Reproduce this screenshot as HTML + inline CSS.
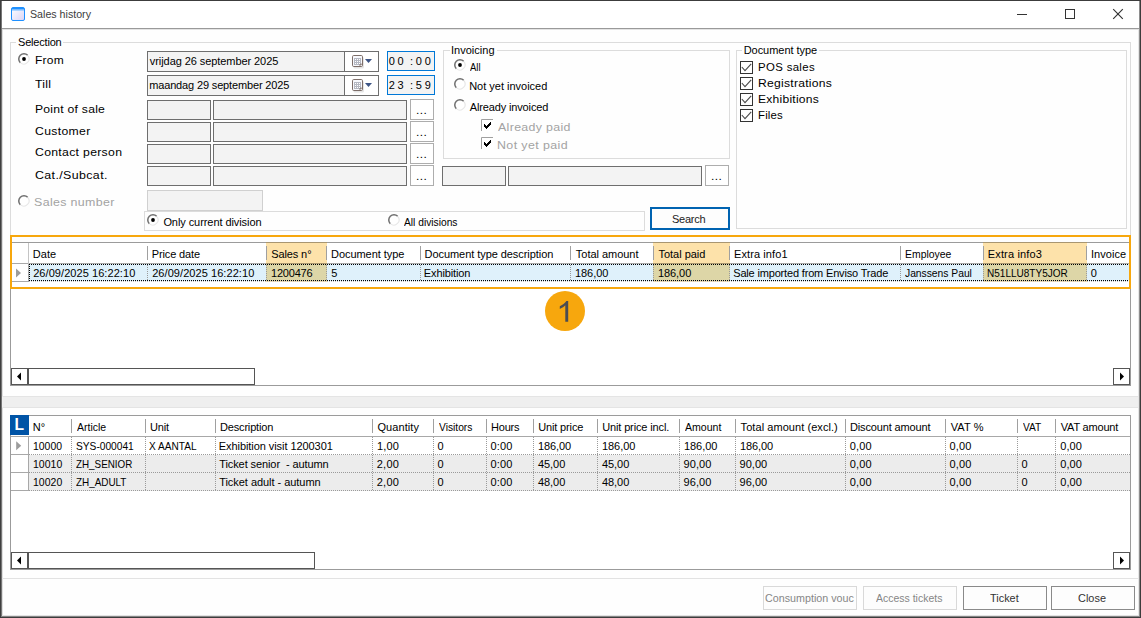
<!DOCTYPE html><html><head><meta charset="utf-8"><title>Sales history</title><style>html,body{margin:0;padding:0;background:#fefefe;}
body{width:1141px;height:618px;overflow:hidden;position:relative;font-family:"Liberation Sans", sans-serif;}
#w div,#w svg,#w span{position:absolute;display:block}
#w span{white-space:pre;line-height:16px;height:16px}
#w{position:absolute;left:0;top:0;width:1141px;height:618px;overflow:hidden}</style></head><body><div id="w"><div style="left:0px;top:0px;width:1141px;height:618px;background:#fefefe"></div><div style="left:0px;top:0px;width:1141px;height:28px;background:#fff"></div><div style="left:0px;top:28px;width:1141px;height:1px;background:#9a9a9a"></div><div style="left:0px;top:29px;width:1141px;height:1px;background:#e4e4e4"></div><div style="left:0px;top:0px;width:1141px;height:1px;background:#3c3c3c"></div><div style="left:0px;top:0px;width:1px;height:618px;background:#3f3f3f"></div><div style="left:1px;top:1px;width:1px;height:618px;background:#767676"></div><div style="left:2px;top:29px;width:1px;height:618px;background:#dedede"></div><div style="left:1140px;top:0px;width:1px;height:618px;background:#3c3c3c"></div><div style="left:1139px;top:1px;width:1px;height:618px;background:#8e8e8e"></div><div style="left:1138px;top:29px;width:1px;height:618px;background:#e6e6e6"></div><div style="left:0px;top:617px;width:1141px;height:1px;background:#3c3c3c"></div><div style="left:1px;top:616px;width:1139px;height:1px;background:#858585"></div><div style="left:2px;top:615px;width:1137px;height:1px;background:#e3e3e3"></div><svg style="left:11px;top:7px" width="14" height="14" viewBox="0 0 14 14"><defs><linearGradient id="ig" x1="0" y1="0" x2="1" y2="1"><stop offset="0" stop-color="#ffffff"/><stop offset="1" stop-color="#d9d4f6"/></linearGradient></defs><rect x="0.5" y="0.5" width="13" height="13" rx="1.5" fill="url(#ig)" stroke="#1e90ff"/><rect x="1" y="1" width="12" height="1.6" fill="#1e90ff"/><rect x="1" y="2.6" width="12" height="1" fill="#7fc0ff"/></svg><svg style="left:1010px;top:4px" width="125" height="22" viewBox="0 0 125 22"><g stroke="#333" stroke-width="1" fill="none"><path d="M7 10.5H17"/><rect x="55.5" y="5.5" width="9" height="9"/><path d="M103.2 5.2L112.8 14.8M112.8 5.2L103.2 14.8" stroke-width="1.15"/></g></svg><div style="left:10px;top:42px;width:1121px;height:194px;border:1px solid #dcdcdc;box-sizing:border-box"></div><div style="left:16px;top:42px;width:47px;height:1px;background:#fefefe"></div><div style="left:443px;top:50px;width:287px;height:109px;border:1px solid #dcdcdc;box-sizing:border-box"></div><div style="left:449.5px;top:50px;width:47px;height:1px;background:#fefefe"></div><div style="left:736px;top:50px;width:391px;height:179px;border:1px solid #dcdcdc;box-sizing:border-box"></div><div style="left:742px;top:50px;width:77px;height:1px;background:#fefefe"></div><div style="left:147px;top:51px;width:232px;height:21px;border:1px solid #6e6e6e;background:#f3f3f3;box-sizing:border-box"></div><div style="left:345px;top:52px;width:33px;height:19px;background:#fff"></div><div style="left:344px;top:52px;width:1px;height:19px;background:#6e6e6e"></div><svg style="left:351px;top:55px" width="24" height="15" viewBox="0 0 24 15"><rect x="2.5" y="2" width="10.5" height="11.5" rx="1.5" fill="#000" opacity="0.10"/><rect x="1.5" y="0.5" width="10" height="11" rx="1.2" fill="#f8f9fd" stroke="#7d6e69"/><rect x="3" y="3" width="7" height="7" fill="#b5b8c2"/><g fill="#fff"><rect x="4" y="4" width="1" height="1"/><rect x="4" y="6" width="1" height="1"/><rect x="4" y="8" width="1" height="1"/><rect x="6" y="4" width="1" height="1"/><rect x="6" y="6" width="1" height="1"/><rect x="6" y="8" width="1" height="1"/><rect x="8" y="4" width="1" height="1"/><rect x="8" y="6" width="1" height="1"/><rect x="8" y="8" width="1" height="1"/></g><path d="M9 11.3V9.2H11.3" fill="none" stroke="#7d6e69" stroke-width="0.9"/><path d="M14 4H21L17.5 8Z" fill="#3d5485"/></svg><div style="left:147px;top:75px;width:232px;height:21px;border:1px solid #6e6e6e;background:#f3f3f3;box-sizing:border-box"></div><div style="left:345px;top:76px;width:33px;height:19px;background:#fff"></div><div style="left:344px;top:76px;width:1px;height:19px;background:#6e6e6e"></div><svg style="left:351px;top:79px" width="24" height="15" viewBox="0 0 24 15"><rect x="2.5" y="2" width="10.5" height="11.5" rx="1.5" fill="#000" opacity="0.10"/><rect x="1.5" y="0.5" width="10" height="11" rx="1.2" fill="#f8f9fd" stroke="#7d6e69"/><rect x="3" y="3" width="7" height="7" fill="#b5b8c2"/><g fill="#fff"><rect x="4" y="4" width="1" height="1"/><rect x="4" y="6" width="1" height="1"/><rect x="4" y="8" width="1" height="1"/><rect x="6" y="4" width="1" height="1"/><rect x="6" y="6" width="1" height="1"/><rect x="6" y="8" width="1" height="1"/><rect x="8" y="4" width="1" height="1"/><rect x="8" y="6" width="1" height="1"/><rect x="8" y="8" width="1" height="1"/></g><path d="M9 11.3V9.2H11.3" fill="none" stroke="#7d6e69" stroke-width="0.9"/><path d="M14 4H21L17.5 8Z" fill="#3d5485"/></svg><div style="left:387px;top:51px;width:48px;height:20px;border:1px solid #0078d7;background:#f3f3f3;box-sizing:border-box"></div><div style="left:387px;top:75px;width:48px;height:20px;border:1px solid #0078d7;background:#f3f3f3;box-sizing:border-box"></div><div style="left:147px;top:100px;width:64px;height:20px;border:1px solid #6e6e6e;background:#f3f3f3;box-sizing:border-box"></div><div style="left:213px;top:100px;width:194px;height:20px;border:1px solid #6e6e6e;background:#f3f3f3;box-sizing:border-box"></div><div style="left:410px;top:99px;width:24px;height:21px;border:1px solid #adadad;background:#fff;box-sizing:border-box"></div><div style="left:147px;top:122px;width:64px;height:20px;border:1px solid #6e6e6e;background:#f3f3f3;box-sizing:border-box"></div><div style="left:213px;top:122px;width:194px;height:20px;border:1px solid #6e6e6e;background:#f3f3f3;box-sizing:border-box"></div><div style="left:410px;top:121px;width:24px;height:21px;border:1px solid #adadad;background:#fff;box-sizing:border-box"></div><div style="left:147px;top:144px;width:64px;height:20px;border:1px solid #6e6e6e;background:#f3f3f3;box-sizing:border-box"></div><div style="left:213px;top:144px;width:194px;height:20px;border:1px solid #6e6e6e;background:#f3f3f3;box-sizing:border-box"></div><div style="left:410px;top:143px;width:24px;height:21px;border:1px solid #adadad;background:#fff;box-sizing:border-box"></div><div style="left:147px;top:166px;width:64px;height:20px;border:1px solid #6e6e6e;background:#f3f3f3;box-sizing:border-box"></div><div style="left:213px;top:166px;width:194px;height:20px;border:1px solid #6e6e6e;background:#f3f3f3;box-sizing:border-box"></div><div style="left:410px;top:165px;width:24px;height:21px;border:1px solid #adadad;background:#fff;box-sizing:border-box"></div><div style="left:442px;top:166px;width:64px;height:20px;border:1px solid #6e6e6e;background:#f3f3f3;box-sizing:border-box"></div><div style="left:508px;top:166px;width:194px;height:20px;border:1px solid #6e6e6e;background:#f3f3f3;box-sizing:border-box"></div><div style="left:705px;top:165px;width:24px;height:21px;border:1px solid #adadad;background:#fff;box-sizing:border-box"></div><div style="left:147px;top:190px;width:116px;height:21px;border:1px solid #d0d0d0;background:#f3f3f3;box-sizing:border-box"></div><div style="left:144px;top:211px;width:501px;height:20px;border:1px solid #dcdcdc;box-sizing:border-box;background:#fefefe"></div><svg style="left:18px;top:53px" width="12" height="12" viewBox="0 0 12 12"><circle cx="6" cy="6" r="5" fill="#fff"/><path d="M2.3 9.7A5.2 5.2 0 0 1 9.7 2.3" fill="none" stroke="#6f6f6f" stroke-width="1.5"/><path d="M9.9 2.6A5.2 5.2 0 0 1 2.6 9.9" fill="none" stroke="#e6e6e6" stroke-width="1.1"/><circle cx="6" cy="6" r="1.9" fill="#000"/></svg><svg style="left:18px;top:195px" width="12" height="12" viewBox="0 0 12 12"><circle cx="6" cy="6" r="5" fill="#fff"/><path d="M2.3 9.7A5.2 5.2 0 0 1 9.7 2.3" fill="none" stroke="#6f6f6f" stroke-width="1.5"/><path d="M9.9 2.6A5.2 5.2 0 0 1 2.6 9.9" fill="none" stroke="#e6e6e6" stroke-width="1.1"/></svg><svg style="left:147px;top:214px" width="12" height="12" viewBox="0 0 12 12"><circle cx="6" cy="6" r="5" fill="#fff"/><path d="M2.3 9.7A5.2 5.2 0 0 1 9.7 2.3" fill="none" stroke="#6f6f6f" stroke-width="1.5"/><path d="M9.9 2.6A5.2 5.2 0 0 1 2.6 9.9" fill="none" stroke="#e6e6e6" stroke-width="1.1"/><circle cx="6" cy="6" r="1.9" fill="#000"/></svg><svg style="left:388px;top:214px" width="12" height="12" viewBox="0 0 12 12"><circle cx="6" cy="6" r="5" fill="#fff"/><path d="M2.3 9.7A5.2 5.2 0 0 1 9.7 2.3" fill="none" stroke="#6f6f6f" stroke-width="1.5"/><path d="M9.9 2.6A5.2 5.2 0 0 1 2.6 9.9" fill="none" stroke="#e6e6e6" stroke-width="1.1"/></svg><svg style="left:454px;top:59px" width="12" height="12" viewBox="0 0 12 12"><circle cx="6" cy="6" r="5" fill="#fff"/><path d="M2.3 9.7A5.2 5.2 0 0 1 9.7 2.3" fill="none" stroke="#6f6f6f" stroke-width="1.5"/><path d="M9.9 2.6A5.2 5.2 0 0 1 2.6 9.9" fill="none" stroke="#e6e6e6" stroke-width="1.1"/><circle cx="6" cy="6" r="1.9" fill="#000"/></svg><svg style="left:454px;top:78px" width="12" height="12" viewBox="0 0 12 12"><circle cx="6" cy="6" r="5" fill="#fff"/><path d="M2.3 9.7A5.2 5.2 0 0 1 9.7 2.3" fill="none" stroke="#6f6f6f" stroke-width="1.5"/><path d="M9.9 2.6A5.2 5.2 0 0 1 2.6 9.9" fill="none" stroke="#e6e6e6" stroke-width="1.1"/></svg><svg style="left:454px;top:99px" width="12" height="12" viewBox="0 0 12 12"><circle cx="6" cy="6" r="5" fill="#fff"/><path d="M2.3 9.7A5.2 5.2 0 0 1 9.7 2.3" fill="none" stroke="#6f6f6f" stroke-width="1.5"/><path d="M9.9 2.6A5.2 5.2 0 0 1 2.6 9.9" fill="none" stroke="#e6e6e6" stroke-width="1.1"/></svg><div style="left:650px;top:207px;width:80px;height:23px;border:2px solid #0063b1;background:#fdfdfd;box-sizing:border-box"></div><svg style="left:481px;top:119px" width="13" height="13" viewBox="0 0 13 13"><rect x="1" y="1" width="12" height="12" fill="#fff"/><path d="M0.5 12V0.5H12" fill="none" stroke="#a0a0a0"/><g fill="#000"><rect x="3" y="5" width="1" height="3"/><rect x="4" y="6" width="1" height="3"/><rect x="5" y="7" width="1" height="3"/><rect x="6" y="6" width="1" height="3"/><rect x="7" y="5" width="1" height="3"/><rect x="8" y="4" width="1" height="3"/><rect x="9" y="3" width="1" height="3"/></g></svg><svg style="left:481px;top:137px" width="13" height="13" viewBox="0 0 13 13"><rect x="1" y="1" width="12" height="12" fill="#fff"/><path d="M0.5 12V0.5H12" fill="none" stroke="#a0a0a0"/><g fill="#000"><rect x="3" y="5" width="1" height="3"/><rect x="4" y="6" width="1" height="3"/><rect x="5" y="7" width="1" height="3"/><rect x="6" y="6" width="1" height="3"/><rect x="7" y="5" width="1" height="3"/><rect x="8" y="4" width="1" height="3"/><rect x="9" y="3" width="1" height="3"/></g></svg><svg style="left:740px;top:61px" width="13" height="13" viewBox="0 0 13 13"><rect x="0.5" y="0.5" width="12" height="12" fill="#fff" stroke="#333"/><path d="M1.8 6L5 9.6L11.2 2.8" fill="none" stroke="#4a4a4a" stroke-width="1.1"/></svg><svg style="left:740px;top:77px" width="13" height="13" viewBox="0 0 13 13"><rect x="0.5" y="0.5" width="12" height="12" fill="#fff" stroke="#333"/><path d="M1.8 6L5 9.6L11.2 2.8" fill="none" stroke="#4a4a4a" stroke-width="1.1"/></svg><svg style="left:740px;top:93px" width="13" height="13" viewBox="0 0 13 13"><rect x="0.5" y="0.5" width="12" height="12" fill="#fff" stroke="#333"/><path d="M1.8 6L5 9.6L11.2 2.8" fill="none" stroke="#4a4a4a" stroke-width="1.1"/></svg><svg style="left:740px;top:109px" width="13" height="13" viewBox="0 0 13 13"><rect x="0.5" y="0.5" width="12" height="12" fill="#fff" stroke="#333"/><path d="M1.8 6L5 9.6L11.2 2.8" fill="none" stroke="#4a4a4a" stroke-width="1.1"/></svg><div style="left:10px;top:242px;width:1121px;height:144px;border:1px solid #9b9b9b;box-sizing:border-box;background:#fff"></div><div style="left:11px;top:263px;width:1119px;height:1px;background:#a8a8a8"></div><div style="left:29px;top:264px;width:1101px;height:17px;background:#dff1fb"></div><div style="left:266px;top:243px;width:61px;height:39px;background:#fde2aa"></div><div style="left:266px;top:264px;width:61px;height:17px;background:#ddd6a7"></div><div style="left:653px;top:243px;width:77px;height:39px;background:#fde2aa"></div><div style="left:653px;top:264px;width:77px;height:17px;background:#ddd6a7"></div><div style="left:983px;top:243px;width:104px;height:39px;background:#fde2aa"></div><div style="left:983px;top:264px;width:104px;height:17px;background:#ddd6a7"></div><div style="left:28px;top:243px;width:1px;height:21px;background:#c4c4c4"></div><div style="left:147px;top:246px;width:1px;height:14px;background:#a0a0a0"></div><div style="left:147px;top:265px;width:1px;height:15px;background:repeating-linear-gradient(to bottom,#9a9a9a 0 1px,transparent 1px 2px)"></div><div style="left:266px;top:246px;width:1px;height:14px;background:#a0a0a0"></div><div style="left:266px;top:265px;width:1px;height:15px;background:repeating-linear-gradient(to bottom,#9a9a9a 0 1px,transparent 1px 2px)"></div><div style="left:326px;top:246px;width:1px;height:14px;background:#a0a0a0"></div><div style="left:326px;top:265px;width:1px;height:15px;background:repeating-linear-gradient(to bottom,#9a9a9a 0 1px,transparent 1px 2px)"></div><div style="left:420px;top:246px;width:1px;height:14px;background:#a0a0a0"></div><div style="left:420px;top:265px;width:1px;height:15px;background:repeating-linear-gradient(to bottom,#9a9a9a 0 1px,transparent 1px 2px)"></div><div style="left:570px;top:246px;width:1px;height:14px;background:#a0a0a0"></div><div style="left:570px;top:265px;width:1px;height:15px;background:repeating-linear-gradient(to bottom,#9a9a9a 0 1px,transparent 1px 2px)"></div><div style="left:653px;top:246px;width:1px;height:14px;background:#a0a0a0"></div><div style="left:653px;top:265px;width:1px;height:15px;background:repeating-linear-gradient(to bottom,#9a9a9a 0 1px,transparent 1px 2px)"></div><div style="left:729px;top:246px;width:1px;height:14px;background:#a0a0a0"></div><div style="left:729px;top:265px;width:1px;height:15px;background:repeating-linear-gradient(to bottom,#9a9a9a 0 1px,transparent 1px 2px)"></div><div style="left:900px;top:246px;width:1px;height:14px;background:#a0a0a0"></div><div style="left:900px;top:265px;width:1px;height:15px;background:repeating-linear-gradient(to bottom,#9a9a9a 0 1px,transparent 1px 2px)"></div><div style="left:983px;top:246px;width:1px;height:14px;background:#a0a0a0"></div><div style="left:983px;top:265px;width:1px;height:15px;background:repeating-linear-gradient(to bottom,#9a9a9a 0 1px,transparent 1px 2px)"></div><div style="left:1086px;top:246px;width:1px;height:14px;background:#a0a0a0"></div><div style="left:1086px;top:265px;width:1px;height:15px;background:repeating-linear-gradient(to bottom,#9a9a9a 0 1px,transparent 1px 2px)"></div><div style="left:29px;top:264px;width:1101px;height:1px;background:repeating-linear-gradient(to right,#000 0 1px,transparent 1px 2px)"></div><div style="left:29px;top:280px;width:1101px;height:1px;background:repeating-linear-gradient(to right,#000 0 1px,transparent 1px 2px)"></div><div style="left:29px;top:264px;width:1px;height:17px;background:repeating-linear-gradient(to bottom,#000 0 1px,transparent 1px 2px)"></div><div style="left:11px;top:264px;width:17px;height:18px;background:#fff"></div><div style="left:11px;top:281px;width:18px;height:1px;background:#a8a8a8"></div><div style="left:28px;top:264px;width:1px;height:18px;background:#a8a8a8"></div><div style="left:29px;top:281px;width:1101px;height:1px;background:repeating-linear-gradient(to right,#c8c8c8 0 1px,transparent 1px 2px)"></div><svg style="left:16px;top:268px" width="6" height="10" viewBox="0 0 6 10"><path d="M0 0.5L5 5L0 9.5Z" fill="#9c9c9c"/></svg><div style="left:266px;top:242px;width:61px;height:1px;background:#a89671"></div><div style="left:266px;top:263px;width:61px;height:1px;background:#a7956f"></div><div style="left:653px;top:242px;width:77px;height:1px;background:#a89671"></div><div style="left:653px;top:263px;width:77px;height:1px;background:#a7956f"></div><div style="left:983px;top:242px;width:104px;height:1px;background:#a89671"></div><div style="left:983px;top:263px;width:104px;height:1px;background:#a7956f"></div><div style="left:10px;top:235px;width:1121px;height:54px;border:2px solid #f7a70d;box-sizing:border-box"></div><div style="left:545px;top:291px;width:40px;height:40px;border-radius:50%;background:#f7a70d"></div><svg style="left:555px;top:296px" width="20" height="30" viewBox="555 296 20 30"><path d="M568.2 321.8H565.3V305.2C564.2 306.3 562.2 307.9 559.8 308.9V306.2C562.9 304.9 565.4 302.7 566.4 301H568.2Z" fill="#4a4c53"/></svg><div style="left:11px;top:368px;width:17px;height:17px;border:1px solid #555;background:#fff;box-sizing:border-box"></div><svg style="left:16px;top:372px" width="6" height="9" viewBox="0 0 6 9"><path d="M5 0.5L1 4.5L5 8.5Z" fill="#000"/></svg><div style="left:28px;top:368px;width:227px;height:17px;border:1px solid #555;background:#fff;box-sizing:border-box"></div><div style="left:1113px;top:368px;width:17px;height:17px;border:1px solid #555;background:#fff;box-sizing:border-box"></div><svg style="left:1119px;top:372px" width="6" height="9" viewBox="0 0 6 9"><path d="M1 0.5L5 4.5L1 8.5Z" fill="#000"/></svg><div style="left:2px;top:396px;width:1136px;height:12px;background:#efefef;border-top:1px solid #e4e4e4;border-bottom:1px solid #e4e4e4;box-sizing:border-box"></div><div style="left:10px;top:415px;width:1121px;height:155px;border:1px solid #9b9b9b;box-sizing:border-box;background:#fff"></div><div style="left:10px;top:415px;width:19px;height:20px;background:#0054a6"></div><div style="left:11px;top:436px;width:1119px;height:1px;background:#a8a8a8"></div><div style="left:29px;top:455px;width:1101px;height:36px;background:#ececec"></div><div style="left:71px;top:419px;width:1px;height:14px;background:#a0a0a0"></div><div style="left:71px;top:437px;width:1px;height:54px;background:repeating-linear-gradient(to bottom,#9a9a9a 0 1px,transparent 1px 2px)"></div><div style="left:145px;top:419px;width:1px;height:14px;background:#a0a0a0"></div><div style="left:145px;top:437px;width:1px;height:54px;background:repeating-linear-gradient(to bottom,#9a9a9a 0 1px,transparent 1px 2px)"></div><div style="left:215px;top:419px;width:1px;height:14px;background:#a0a0a0"></div><div style="left:215px;top:437px;width:1px;height:54px;background:repeating-linear-gradient(to bottom,#9a9a9a 0 1px,transparent 1px 2px)"></div><div style="left:372px;top:419px;width:1px;height:14px;background:#a0a0a0"></div><div style="left:372px;top:437px;width:1px;height:54px;background:repeating-linear-gradient(to bottom,#9a9a9a 0 1px,transparent 1px 2px)"></div><div style="left:433px;top:419px;width:1px;height:14px;background:#a0a0a0"></div><div style="left:433px;top:437px;width:1px;height:54px;background:repeating-linear-gradient(to bottom,#9a9a9a 0 1px,transparent 1px 2px)"></div><div style="left:486px;top:419px;width:1px;height:14px;background:#a0a0a0"></div><div style="left:486px;top:437px;width:1px;height:54px;background:repeating-linear-gradient(to bottom,#9a9a9a 0 1px,transparent 1px 2px)"></div><div style="left:533px;top:419px;width:1px;height:14px;background:#a0a0a0"></div><div style="left:533px;top:437px;width:1px;height:54px;background:repeating-linear-gradient(to bottom,#9a9a9a 0 1px,transparent 1px 2px)"></div><div style="left:597px;top:419px;width:1px;height:14px;background:#a0a0a0"></div><div style="left:597px;top:437px;width:1px;height:54px;background:repeating-linear-gradient(to bottom,#9a9a9a 0 1px,transparent 1px 2px)"></div><div style="left:679px;top:419px;width:1px;height:14px;background:#a0a0a0"></div><div style="left:679px;top:437px;width:1px;height:54px;background:repeating-linear-gradient(to bottom,#9a9a9a 0 1px,transparent 1px 2px)"></div><div style="left:735px;top:419px;width:1px;height:14px;background:#a0a0a0"></div><div style="left:735px;top:437px;width:1px;height:54px;background:repeating-linear-gradient(to bottom,#9a9a9a 0 1px,transparent 1px 2px)"></div><div style="left:845px;top:419px;width:1px;height:14px;background:#a0a0a0"></div><div style="left:845px;top:437px;width:1px;height:54px;background:repeating-linear-gradient(to bottom,#9a9a9a 0 1px,transparent 1px 2px)"></div><div style="left:945px;top:419px;width:1px;height:14px;background:#a0a0a0"></div><div style="left:945px;top:437px;width:1px;height:54px;background:repeating-linear-gradient(to bottom,#9a9a9a 0 1px,transparent 1px 2px)"></div><div style="left:1017px;top:419px;width:1px;height:14px;background:#a0a0a0"></div><div style="left:1017px;top:437px;width:1px;height:54px;background:repeating-linear-gradient(to bottom,#9a9a9a 0 1px,transparent 1px 2px)"></div><div style="left:1055px;top:419px;width:1px;height:14px;background:#a0a0a0"></div><div style="left:1055px;top:437px;width:1px;height:54px;background:repeating-linear-gradient(to bottom,#9a9a9a 0 1px,transparent 1px 2px)"></div><div style="left:29px;top:454px;width:1101px;height:1px;background:repeating-linear-gradient(to right,#9a9a9a 0 1px,transparent 1px 2px)"></div><div style="left:29px;top:472px;width:1101px;height:1px;background:repeating-linear-gradient(to right,#9a9a9a 0 1px,transparent 1px 2px)"></div><div style="left:29px;top:490px;width:1101px;height:1px;background:repeating-linear-gradient(to right,#9a9a9a 0 1px,transparent 1px 2px)"></div><div style="left:11px;top:437px;width:17px;height:54px;background:#fff"></div><div style="left:28px;top:436px;width:1px;height:55px;background:#a8a8a8"></div><div style="left:11px;top:454px;width:18px;height:1px;background:#a8a8a8"></div><div style="left:11px;top:472px;width:18px;height:1px;background:#a8a8a8"></div><div style="left:11px;top:490px;width:18px;height:1px;background:#a8a8a8"></div><svg style="left:16px;top:441px" width="6" height="10" viewBox="0 0 6 10"><path d="M0.2 0.3L5.2 4.7L0.2 9.2Z" fill="#9c9c9c"/></svg><div style="left:11px;top:552px;width:17px;height:17px;border:1px solid #555;background:#fff;box-sizing:border-box"></div><svg style="left:16px;top:556px" width="6" height="9" viewBox="0 0 6 9"><path d="M5 0.5L1 4.5L5 8.5Z" fill="#000"/></svg><div style="left:28px;top:552px;width:287px;height:17px;border:1px solid #555;background:#fff;box-sizing:border-box"></div><div style="left:1113px;top:552px;width:17px;height:17px;border:1px solid #555;background:#fff;box-sizing:border-box"></div><svg style="left:1119px;top:556px" width="6" height="9" viewBox="0 0 6 9"><path d="M1 0.5L5 4.5L1 8.5Z" fill="#000"/></svg><div style="left:2px;top:578px;width:1136px;height:1px;background:#e2e2e2"></div><div style="left:763px;top:586px;width:94px;height:24px;border:1px solid #d9d9d9;background:#fdfdfd;box-sizing:border-box"></div><div style="left:863px;top:586px;width:94px;height:24px;border:1px solid #d9d9d9;background:#fdfdfd;box-sizing:border-box"></div><div style="left:963px;top:586px;width:84px;height:24px;border:1px solid #8a8a8a;background:#fdfdfd;box-sizing:border-box"></div><div style="left:1051px;top:586px;width:84px;height:24px;border:1px solid #8a8a8a;background:#fdfdfd;box-sizing:border-box"></div><span style="left:30.06px;top:5.92px;font-size:11.2px;color:#3c3c3c;font-weight:normal;letter-spacing:0.000px;transform:scaleX(0.9519);transform-origin:0 0;">Sales history</span><span style="left:17.99px;top:33.59px;font-size:11px;color:#000;font-weight:normal;letter-spacing:-0.193px;">Selection</span><span style="left:450.95px;top:41.79px;font-size:11px;color:#000;font-weight:normal;letter-spacing:0.031px;">Invoicing</span><span style="left:743.68px;top:41.79px;font-size:11px;color:#000;font-weight:normal;letter-spacing:-0.040px;">Document type</span><span style="left:34.77px;top:52.05px;font-size:11.4px;color:#000;font-weight:normal;letter-spacing:0.259px;transform:scaleX(1.0523);transform-origin:0 0;">From</span><span style="left:34.95px;top:76.15px;font-size:11.4px;color:#000;font-weight:normal;letter-spacing:0.253px;transform:scaleX(1.0744);transform-origin:0 0;">Till</span><span style="left:35.08px;top:101.05px;font-size:11.4px;color:#000;font-weight:normal;letter-spacing:0.219px;transform:scaleX(1.0697);transform-origin:0 0;">Point of sale</span><span style="left:35.37px;top:123.05px;font-size:11.4px;color:#000;font-weight:normal;letter-spacing:0.332px;transform:scaleX(1.0700);transform-origin:0 0;">Customer</span><span style="left:35.05px;top:144.05px;font-size:11.4px;color:#000;font-weight:normal;letter-spacing:0.280px;transform:scaleX(1.0751);transform-origin:0 0;">Contact person</span><span style="left:35.37px;top:167.05px;font-size:11.4px;color:#000;font-weight:normal;letter-spacing:0.342px;transform:scaleX(1.0900);transform-origin:0 0;">Cat./Subcat.</span><span style="left:33.71px;top:194.05px;font-size:11.4px;color:#a3a3a3;font-weight:normal;letter-spacing:0.317px;transform:scaleX(1.0900);transform-origin:0 0;">Sales number</span><span style="left:149.87px;top:52.79px;font-size:11px;color:#000;font-weight:normal;letter-spacing:-0.076px;">vrijdag 26 september 2025</span><span style="left:149.20px;top:76.79px;font-size:11px;color:#000;font-weight:normal;letter-spacing:-0.146px;">maandag 29 september 2025</span><span style="left:388.65px;top:53.19px;font-size:11px;color:#000;font-weight:normal;letter-spacing:0.000px;">0</span><span style="left:397.45px;top:53.19px;font-size:11px;color:#000;font-weight:normal;letter-spacing:0.000px;">0</span><span style="left:410.12px;top:53.19px;font-size:11px;color:#000;font-weight:normal;letter-spacing:0.000px;">:</span><span style="left:415.83px;top:53.19px;font-size:11px;color:#000;font-weight:normal;letter-spacing:0.000px;">0</span><span style="left:424.71px;top:53.19px;font-size:11px;color:#000;font-weight:normal;letter-spacing:0.000px;">0</span><span style="left:388.70px;top:77.19px;font-size:11px;color:#000;font-weight:normal;letter-spacing:0.000px;">2</span><span style="left:397.49px;top:77.19px;font-size:11px;color:#000;font-weight:normal;letter-spacing:0.000px;">3</span><span style="left:410.12px;top:77.19px;font-size:11px;color:#000;font-weight:normal;letter-spacing:0.000px;">:</span><span style="left:415.80px;top:77.19px;font-size:11px;color:#000;font-weight:normal;letter-spacing:0.000px;">5</span><span style="left:424.67px;top:77.19px;font-size:11px;color:#000;font-weight:normal;letter-spacing:0.000px;">9</span><span style="left:415.96px;top:101.69px;font-size:11px;color:#000;font-weight:normal;letter-spacing:0.385px;transform:scaleX(1.0900);transform-origin:0 0;">...</span><span style="left:415.96px;top:123.69px;font-size:11px;color:#000;font-weight:normal;letter-spacing:0.385px;transform:scaleX(1.0900);transform-origin:0 0;">...</span><span style="left:415.96px;top:145.69px;font-size:11px;color:#000;font-weight:normal;letter-spacing:0.385px;transform:scaleX(1.0900);transform-origin:0 0;">...</span><span style="left:415.96px;top:167.69px;font-size:11px;color:#000;font-weight:normal;letter-spacing:0.385px;transform:scaleX(1.0900);transform-origin:0 0;">...</span><span style="left:710.96px;top:167.69px;font-size:11px;color:#000;font-weight:normal;letter-spacing:0.385px;transform:scaleX(1.0900);transform-origin:0 0;">...</span><span style="left:163.40px;top:214.19px;font-size:11px;color:#000;font-weight:normal;letter-spacing:-0.075px;">Only current division</span><span style="left:404.00px;top:213.99px;font-size:11px;color:#000;font-weight:normal;letter-spacing:0.000px;transform:scaleX(0.9308);transform-origin:0 0;">All divisions</span><span style="left:672.02px;top:210.79px;font-size:11px;color:#222;font-weight:normal;letter-spacing:-0.259px;">Search</span><span style="left:470.00px;top:58.89px;font-size:11px;color:#000;font-weight:normal;letter-spacing:0.000px;transform:scaleX(0.8616);transform-origin:0 0;">All</span><span style="left:469.20px;top:78.19px;font-size:11px;color:#000;font-weight:normal;letter-spacing:-0.007px;">Not yet invoiced</span><span style="left:469.75px;top:99.19px;font-size:11px;color:#000;font-weight:normal;letter-spacing:-0.141px;">Already invoiced</span><span style="left:497.84px;top:119.05px;font-size:11.4px;color:#a3a3a3;font-weight:normal;letter-spacing:0.295px;transform:scaleX(1.0892);transform-origin:0 0;">Already paid</span><span style="left:496.80px;top:137.05px;font-size:11.4px;color:#a3a3a3;font-weight:normal;letter-spacing:0.368px;transform:scaleX(1.0900);transform-origin:0 0;">Not yet paid</span><span style="left:758.00px;top:58.85px;font-size:11.4px;color:#000;font-weight:normal;letter-spacing:0.353px;">POS sales</span><span style="left:758.24px;top:74.85px;font-size:11.4px;color:#000;font-weight:normal;letter-spacing:0.229px;transform:scaleX(1.0659);transform-origin:0 0;">Registrations</span><span style="left:758.30px;top:90.85px;font-size:11.4px;color:#000;font-weight:normal;letter-spacing:0.225px;transform:scaleX(1.0601);transform-origin:0 0;">Exhibitions</span><span style="left:758.00px;top:106.85px;font-size:11.4px;color:#000;font-weight:normal;letter-spacing:0.192px;">Files</span><span style="left:32.78px;top:246.19px;font-size:11px;color:#000;font-weight:normal;letter-spacing:0.080px;">Date</span><span style="left:33.17px;top:265.19px;font-size:11px;color:#000;font-weight:normal;letter-spacing:0.066px;">26/09/2025 16:22:10</span><span style="left:151.72px;top:246.19px;font-size:11px;color:#000;font-weight:normal;letter-spacing:-0.120px;">Price date</span><span style="left:152.17px;top:265.19px;font-size:11px;color:#000;font-weight:normal;letter-spacing:0.066px;">26/09/2025 16:22:10</span><span style="left:271.17px;top:246.19px;font-size:11px;color:#000;font-weight:normal;letter-spacing:-0.103px;">Sales n°</span><span style="left:270.97px;top:265.19px;font-size:11px;color:#000;font-weight:normal;letter-spacing:-0.193px;">1200476</span><span style="left:331.02px;top:246.19px;font-size:11px;color:#000;font-weight:normal;letter-spacing:-0.051px;">Document type</span><span style="left:331.31px;top:265.19px;font-size:11px;color:#000;font-weight:normal;letter-spacing:0.000px;">5</span><span style="left:424.56px;top:246.19px;font-size:11px;color:#000;font-weight:normal;letter-spacing:-0.060px;">Document type description</span><span style="left:423.87px;top:265.19px;font-size:11px;color:#000;font-weight:normal;letter-spacing:-0.131px;">Exhibition</span><span style="left:575.82px;top:246.19px;font-size:11px;color:#000;font-weight:normal;letter-spacing:-0.025px;">Total amount</span><span style="left:574.95px;top:265.19px;font-size:11px;color:#000;font-weight:normal;letter-spacing:-0.052px;">186,00</span><span style="left:658.56px;top:246.19px;font-size:11px;color:#000;font-weight:normal;letter-spacing:-0.034px;">Total paid</span><span style="left:657.97px;top:265.19px;font-size:11px;color:#000;font-weight:normal;letter-spacing:-0.070px;">186,00</span><span style="left:734.06px;top:246.19px;font-size:11px;color:#000;font-weight:normal;letter-spacing:0.092px;">Extra info1</span><span style="left:733.24px;top:265.19px;font-size:11px;color:#000;font-weight:normal;letter-spacing:-0.170px;">Sale imported from Enviso Trade</span><span style="left:904.78px;top:246.19px;font-size:11px;color:#000;font-weight:normal;letter-spacing:0.000px;transform:scaleX(0.9486);transform-origin:0 0;">Employee</span><span style="left:905.00px;top:265.19px;font-size:11px;color:#000;font-weight:normal;letter-spacing:-0.021px;transform:scaleX(0.9383);transform-origin:0 0;">Janssens Paul</span><span style="left:987.75px;top:246.19px;font-size:11px;color:#000;font-weight:normal;letter-spacing:0.156px;">Extra info3</span><span style="left:987.27px;top:265.19px;font-size:11px;color:#000;font-weight:normal;letter-spacing:0.017px;transform:scaleX(0.9088);transform-origin:0 0;">N51LLU8TY5JOR</span><span style="left:1091.01px;top:246.19px;font-size:11px;color:#000;font-weight:normal;letter-spacing:0.047px;">Invoice</span><span style="left:1090.83px;top:265.19px;font-size:11px;color:#000;font-weight:normal;letter-spacing:0.000px;">0</span><span style="left:14.54px;top:417.36px;font-size:15.7px;color:#fff;font-weight:bold;letter-spacing:0.000px;">L</span><span style="left:32.78px;top:419.39px;font-size:11px;color:#000;font-weight:normal;letter-spacing:-0.000px;">N°</span><span style="left:33.32px;top:438.19px;font-size:11px;color:#000;font-weight:normal;letter-spacing:0.000px;transform:scaleX(0.9487);transform-origin:0 0;">10000</span><span style="left:33.33px;top:456.19px;font-size:11px;color:#000;font-weight:normal;letter-spacing:0.027px;transform:scaleX(0.9513);transform-origin:0 0;">10010</span><span style="left:33.33px;top:474.19px;font-size:11px;color:#000;font-weight:normal;letter-spacing:0.027px;transform:scaleX(0.9513);transform-origin:0 0;">10020</span><span style="left:76.98px;top:419.39px;font-size:11px;color:#000;font-weight:normal;letter-spacing:0.000px;transform:scaleX(0.9525);transform-origin:0 0;">Article</span><span style="left:75.66px;top:438.19px;font-size:11px;color:#000;font-weight:normal;letter-spacing:-0.023px;transform:scaleX(0.9298);transform-origin:0 0;">SYS-000041</span><span style="left:75.80px;top:456.19px;font-size:11px;color:#000;font-weight:normal;letter-spacing:0.000px;transform:scaleX(0.8947);transform-origin:0 0;">ZH_SENIOR</span><span style="left:75.55px;top:474.19px;font-size:11px;color:#000;font-weight:normal;letter-spacing:-0.021px;transform:scaleX(0.9018);transform-origin:0 0;">ZH_ADULT</span><span style="left:150.03px;top:419.39px;font-size:11px;color:#000;font-weight:normal;letter-spacing:-0.187px;">Unit</span><span style="left:149.20px;top:438.19px;font-size:11px;color:#000;font-weight:normal;letter-spacing:0.019px;transform:scaleX(0.9152);transform-origin:0 0;">X AANTAL</span><span style="left:220.06px;top:419.39px;font-size:11px;color:#000;font-weight:normal;letter-spacing:-0.180px;">Description</span><span style="left:218.80px;top:438.19px;font-size:11px;color:#000;font-weight:normal;letter-spacing:-0.068px;">Exhibition visit 1200301</span><span style="left:219.24px;top:456.19px;font-size:11px;color:#000;font-weight:normal;letter-spacing:-0.094px;">Ticket senior&nbsp; - autumn</span><span style="left:219.21px;top:474.19px;font-size:11px;color:#000;font-weight:normal;letter-spacing:-0.042px;">Ticket adult - autumn</span><span style="left:377.40px;top:419.39px;font-size:11px;color:#000;font-weight:normal;letter-spacing:0.083px;">Quantity</span><span style="left:376.88px;top:438.19px;font-size:11px;color:#000;font-weight:normal;letter-spacing:0.180px;">1,00</span><span style="left:376.77px;top:456.19px;font-size:11px;color:#000;font-weight:normal;letter-spacing:0.222px;">2,00</span><span style="left:376.77px;top:474.19px;font-size:11px;color:#000;font-weight:normal;letter-spacing:0.222px;">2,00</span><span style="left:438.98px;top:419.39px;font-size:11px;color:#000;font-weight:normal;letter-spacing:0.000px;transform:scaleX(0.9316);transform-origin:0 0;">Visitors</span><span style="left:437.44px;top:438.19px;font-size:11px;color:#000;font-weight:normal;letter-spacing:0.000px;">0</span><span style="left:437.41px;top:456.19px;font-size:11px;color:#000;font-weight:normal;letter-spacing:0.000px;">0</span><span style="left:437.41px;top:474.19px;font-size:11px;color:#000;font-weight:normal;letter-spacing:0.000px;">0</span><span style="left:491.06px;top:419.39px;font-size:11px;color:#000;font-weight:normal;letter-spacing:-0.230px;">Hours</span><span style="left:490.50px;top:438.19px;font-size:11px;color:#000;font-weight:normal;letter-spacing:0.167px;">0:00</span><span style="left:490.43px;top:456.19px;font-size:11px;color:#000;font-weight:normal;letter-spacing:0.217px;">0:00</span><span style="left:490.43px;top:474.19px;font-size:11px;color:#000;font-weight:normal;letter-spacing:0.217px;">0:00</span><span style="left:538.18px;top:419.39px;font-size:11px;color:#000;font-weight:normal;letter-spacing:-0.138px;">Unit price</span><span style="left:537.88px;top:438.19px;font-size:11px;color:#000;font-weight:normal;letter-spacing:-0.056px;">186,00</span><span style="left:538.00px;top:456.19px;font-size:11px;color:#000;font-weight:normal;letter-spacing:-0.064px;">45,00</span><span style="left:538.00px;top:474.19px;font-size:11px;color:#000;font-weight:normal;letter-spacing:-0.064px;">48,00</span><span style="left:602.17px;top:419.39px;font-size:11px;color:#000;font-weight:normal;letter-spacing:-0.128px;">Unit price incl.</span><span style="left:601.93px;top:438.19px;font-size:11px;color:#000;font-weight:normal;letter-spacing:-0.024px;">186,00</span><span style="left:602.00px;top:456.19px;font-size:11px;color:#000;font-weight:normal;letter-spacing:-0.064px;">45,00</span><span style="left:602.00px;top:474.19px;font-size:11px;color:#000;font-weight:normal;letter-spacing:-0.064px;">48,00</span><span style="left:684.98px;top:419.39px;font-size:11px;color:#000;font-weight:normal;letter-spacing:0.000px;transform:scaleX(0.9613);transform-origin:0 0;">Amount</span><span style="left:683.93px;top:438.19px;font-size:11px;color:#000;font-weight:normal;letter-spacing:-0.024px;">186,00</span><span style="left:683.54px;top:456.19px;font-size:11px;color:#000;font-weight:normal;letter-spacing:0.088px;">90,00</span><span style="left:683.54px;top:474.19px;font-size:11px;color:#000;font-weight:normal;letter-spacing:0.088px;">96,00</span><span style="left:740.62px;top:419.39px;font-size:11px;color:#000;font-weight:normal;letter-spacing:0.061px;">Total amount (excl.)</span><span style="left:739.88px;top:438.19px;font-size:11px;color:#000;font-weight:normal;letter-spacing:-0.056px;">186,00</span><span style="left:739.53px;top:456.19px;font-size:11px;color:#000;font-weight:normal;letter-spacing:0.029px;">90,00</span><span style="left:739.53px;top:474.19px;font-size:11px;color:#000;font-weight:normal;letter-spacing:0.029px;">96,00</span><span style="left:850.00px;top:419.39px;font-size:11px;color:#000;font-weight:normal;letter-spacing:-0.144px;">Discount amount</span><span style="left:849.86px;top:438.19px;font-size:11px;color:#000;font-weight:normal;letter-spacing:0.115px;">0,00</span><span style="left:849.77px;top:456.19px;font-size:11px;color:#000;font-weight:normal;letter-spacing:0.127px;">0,00</span><span style="left:849.77px;top:474.19px;font-size:11px;color:#000;font-weight:normal;letter-spacing:0.127px;">0,00</span><span style="left:950.73px;top:419.39px;font-size:11px;color:#000;font-weight:normal;letter-spacing:0.110px;">VAT %</span><span style="left:949.50px;top:438.19px;font-size:11px;color:#000;font-weight:normal;letter-spacing:0.167px;">0,00</span><span style="left:949.42px;top:456.19px;font-size:11px;color:#000;font-weight:normal;letter-spacing:0.217px;">0,00</span><span style="left:949.42px;top:474.19px;font-size:11px;color:#000;font-weight:normal;letter-spacing:0.217px;">0,00</span><span style="left:1022.98px;top:419.39px;font-size:11px;color:#000;font-weight:normal;letter-spacing:0.000px;transform:scaleX(0.9250);transform-origin:0 0;">VAT</span><span style="left:1021.42px;top:456.19px;font-size:11px;color:#000;font-weight:normal;letter-spacing:0.000px;">0</span><span style="left:1021.42px;top:474.19px;font-size:11px;color:#000;font-weight:normal;letter-spacing:0.000px;">0</span><span style="left:1060.73px;top:419.39px;font-size:11px;color:#000;font-weight:normal;letter-spacing:-0.191px;">VAT amount</span><span style="left:1060.26px;top:438.19px;font-size:11px;color:#000;font-weight:normal;letter-spacing:0.047px;">0,00</span><span style="left:1060.20px;top:456.19px;font-size:11px;color:#000;font-weight:normal;letter-spacing:0.080px;">0,00</span><span style="left:1060.20px;top:474.19px;font-size:11px;color:#000;font-weight:normal;letter-spacing:0.080px;">0,00</span><span style="left:765.21px;top:590.02px;font-size:11.5px;color:#868686;font-weight:normal;letter-spacing:0.020px;transform:scaleX(0.9306);transform-origin:0 0;">Consumption vouc</span><span style="left:875.91px;top:590.02px;font-size:11.5px;color:#868686;font-weight:normal;letter-spacing:0.000px;transform:scaleX(0.9112);transform-origin:0 0;">Access tickets</span><span style="left:989.97px;top:590.02px;font-size:11.5px;color:#333;font-weight:normal;letter-spacing:0.018px;transform:scaleX(0.9445);transform-origin:0 0;">Ticket</span><span style="left:1078.26px;top:590.02px;font-size:11.5px;color:#333;font-weight:normal;letter-spacing:0.024px;transform:scaleX(0.9488);transform-origin:0 0;">Close</span></div></body></html>
